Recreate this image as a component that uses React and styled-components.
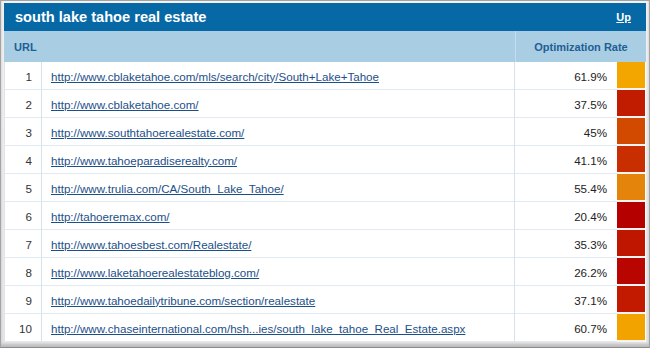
import React from "react";
import styled, { createGlobalStyle } from "styled-components";

const Global = createGlobalStyle`
  html, body { margin: 0; padding: 0; background: #fff; }
  body { font-family: "Liberation Sans", Arial, sans-serif; }
`;

const Frame = styled.div`
  width: 650px;
  height: 348px;
  box-sizing: border-box;
  border: 1px solid #a3a3a3;
  border-bottom-color: #8a8a8a;
  background: linear-gradient(#f2f2f2, #e6e6e6);
  padding: 2px 3px 0 3px;
  box-shadow: inset 0 -3px 3px rgba(0,0,0,0.18);
`;

const Panel = styled.div`
  background: #fff;
  display: flex;
  flex-direction: column;
`;

const TitleBar = styled.div`
  height: 28px;
  background: #0669a6;
  display: flex;
  align-items: center;
  justify-content: space-between;
  padding: 0 15px 0 11px;
`;

const Title = styled.span`
  color: #fff;
  font: bold 14.6px "Liberation Sans", Arial, sans-serif;
`;

const UpLink = styled.a`
  color: #fff;
  font: bold 11px "Liberation Sans", Arial, sans-serif;
  text-decoration: underline;
`;

const cols = "38px 473px 102px 29px";

const HeaderRow = styled.div`
  display: grid;
  grid-template-columns: ${cols};
  height: 31px;
  background: #a9cde2;
  color: #1d5f96;
  font: bold 11px "Liberation Sans", Arial, sans-serif;
`;

const HeadCell = styled.div`
  display: flex;
  align-items: center;
  padding-left: ${(p) => p.$pl || 0}px;
  justify-content: ${(p) => (p.$center ? "center" : "flex-start")};
  grid-column: ${(p) => p.$span || "auto"};
  border-left: ${(p) => (p.$divider ? "1px solid #c4dceb" : "none")};
`;

const Row = styled.div`
  display: grid;
  grid-template-columns: ${cols};
  height: 28px;
  font: 11.6px "Liberation Sans", Arial, sans-serif;
`;

const NumCell = styled.div`
  display: flex;
  align-items: center;
  justify-content: flex-end;
  padding-right: 9px;
  padding-top: 1px;
  color: #333;
  border-bottom: 1px solid #e1eaf1;
  border-right: 1px solid #d5e2ec;
  border-left: 1px solid #dde4ea;
`;

const UrlCell = styled.div`
  display: flex;
  align-items: center;
  padding-left: 9px;
  padding-top: 1px;
  border-bottom: 1px solid #e1eaf1;
  border-right: 1px solid #d5e2ec;
  overflow: hidden;
  white-space: nowrap;
`;

const UrlLink = styled.a`
  color: #1c4f89;
  text-decoration: underline;
`;

const RateCell = styled.div`
  display: flex;
  align-items: center;
  justify-content: flex-end;
  padding-right: 10px;
  padding-top: 1px;
  color: #222;
  border-bottom: 1px solid #e1eaf1;
`;

const Bar = styled.div`
  background: ${(p) => p.$color};
  border-bottom: 2px solid #f4f4f4;
  margin-right: 1px;
`;

const rows = [
  ["http://www.cblaketahoe.com/mls/search/city/South+Lake+Tahoe", "61.9%", "#f3a600"],
  ["http://www.cblaketahoe.com/", "37.5%", "#c21c00"],
  ["http://www.southtahoerealestate.com/", "45%", "#d24a00"],
  ["http://www.tahoeparadiserealty.com/", "41.1%", "#c82e00"],
  ["http://www.trulia.com/CA/South_Lake_Tahoe/", "55.4%", "#e5840a"],
  ["http://tahoeremax.com/", "20.4%", "#b50000"],
  ["http://www.tahoesbest.com/Realestate/", "35.3%", "#bf1600"],
  ["http://www.laketahoerealestateblog.com/", "26.2%", "#b80500"],
  ["http://www.tahoedailytribune.com/section/realestate", "37.1%", "#c21a00"],
  ["http://www.chaseinternational.com/hsh...ies/south_lake_tahoe_Real_Estate.aspx", "60.7%", "#f2a300"],
];

export default function App() {
  return (
    <>
      <Global />
      <Frame>
        <Panel>
          <TitleBar>
            <Title>south lake tahoe real estate</Title>
            <UpLink href="#">Up</UpLink>
          </TitleBar>
          <HeaderRow>
            <HeadCell $pl={10} $span="1 / 3">URL</HeadCell>
            <HeadCell $center $divider $span="3 / 5">Optimization Rate</HeadCell>
          </HeaderRow>
          {rows.map(([url, rate, color], i) => (
            <Row key={i}>
              <NumCell>{i + 1}</NumCell>
              <UrlCell>
                <UrlLink href="#">{url}</UrlLink>
              </UrlCell>
              <RateCell>{rate}</RateCell>
              <Bar $color={color} />
            </Row>
          ))}
        </Panel>
      </Frame>
    </>
  );
}
